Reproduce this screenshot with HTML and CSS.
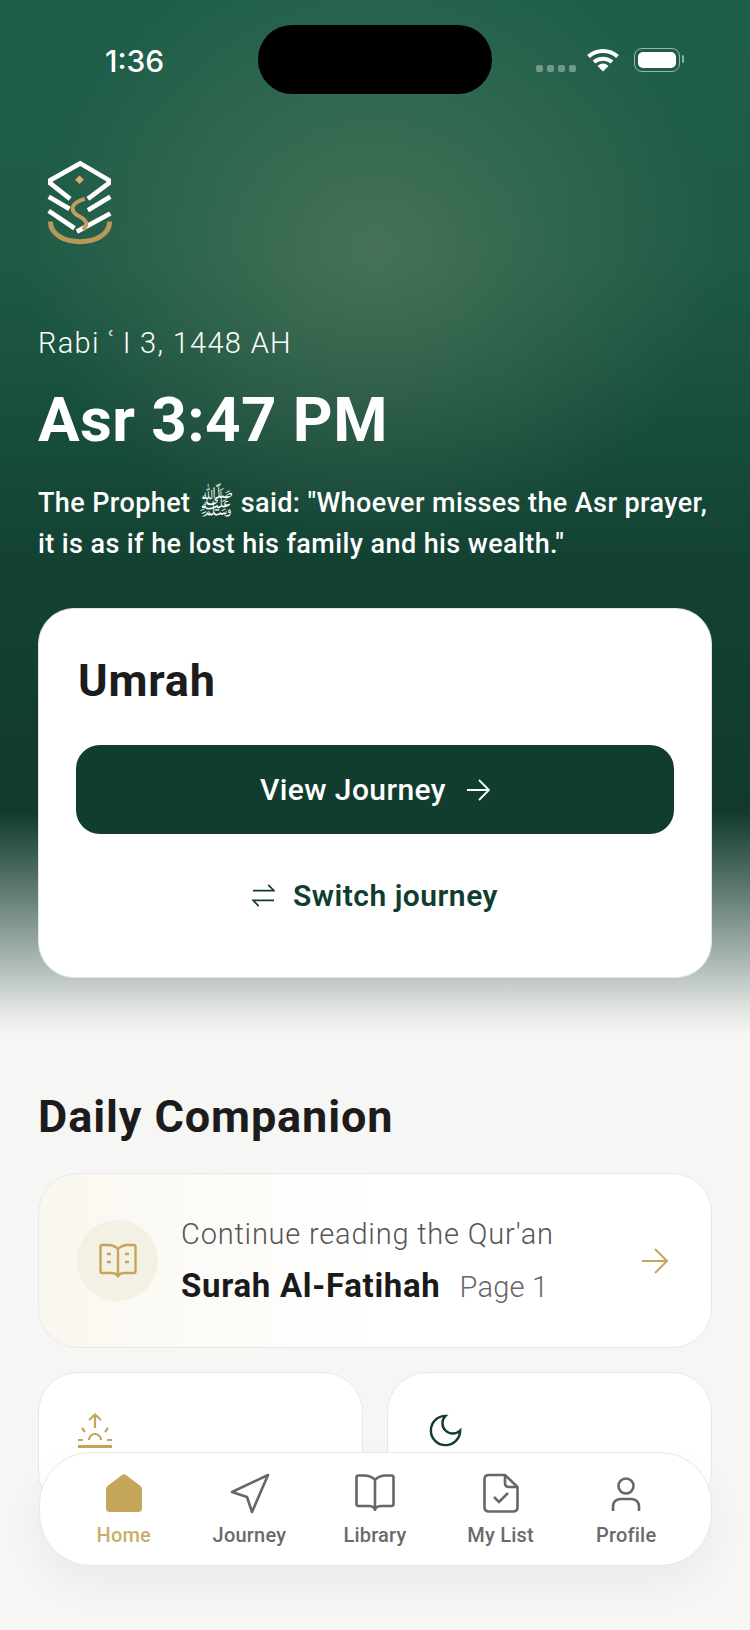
FILE: index.html
```html
<!DOCTYPE html>
<html lang="en">
<head>
    <meta charset="UTF-8">
    <meta name="viewport" content="width=device-width, initial-scale=1.0">
    <title>Home</title>
    <link rel="stylesheet" href="styles.css">
</head>
<body>
    <div class="page">
        <header class="hero">
            <div class="status">
                <span class="time">1:36</span>
                <div class="island"></div>
                <div class="signal"><i></i><i></i><i></i><i></i></div>
                <svg class="wifi" viewBox="0 0 32 24" width="32" height="24">
                    <path d="M1.5 8.5C9.5 1 22.5 1 30.5 8.5" fill="none" stroke="#fff" stroke-width="4"/>
                    <path d="M7 14C12 9.5 20 9.5 25 14" fill="none" stroke="#fff" stroke-width="4"/>
                    <path d="M10.5 18C13.5 14.5 18.500 14.500 21.500 18L16 23.500Z" fill="#fff"/>
                </svg>
                <div class="battery"><div class="battery-fill"></div></div>
            </div>

            <svg class="logo" viewBox="80 60 200 260" width="67" height="87">
                <g fill="none" stroke="#fff" stroke-width="14">
                    <path d="M152 182L93 136V126L182 76L267 126V136L205 182"/>
                    <path d="M88 176L150 212"/>
                    <path d="M88 218L165 270"/>
                    <path d="M272 176L205 216"/>
                    <path d="M272 226L172 280"/>
                </g>
                <path d="M196 182C150 195 150 220 180 235C205 248 205 262 190 274" fill="none" stroke="#c29d5f" stroke-width="12"/>
                <path d="M93 250C93 330 270 330 270 250" fill="none" stroke="#b8975a" stroke-width="15"/>
                <path d="M180 112L193 125L180 138L167 125Z" fill="#d9ac6d"/>
            </svg>

            <p class="hijri">Rabi ʿ I 3, 1448 AH</p>
            <h1 class="prayer">Asr 3:47 PM</h1>
            <p class="quote">
                <span class="quote-line">The Prophet <span class="salawat">ﷺ</span> said: "Whoever misses the Asr prayer,</span>
                <span class="quote-line">it is as if he lost his family and his wealth."</span>
            </p>

            <section class="journey-card">
                <h2 class="journey-title">Umrah</h2>
                <a class="journey-btn">View Journey
                    <svg viewBox="0 0 24 24" width="24" height="24"><path d="M1 12H23M13 2L23 12L13 22" fill="none" stroke="#fff" stroke-width="1.800"/></svg>
                </a>
                <a class="journey-switch">
                    <svg viewBox="0 0 24 24" width="23" height="23"><path d="M1 7H23L17 1M23 17H1L7 23" fill="none" stroke="#113d2e" stroke-width="1.800"/></svg>
                    Switch journey
                </a>
            </section>
        </header>

        <main class="daily">
            <h2 class="daily-title">Daily Companion</h2>

            <div class="reading">
                <div class="reading-icon">
                    <svg viewBox="0 0 38 36" width="38" height="36">
                        <g fill="none" stroke="#c5a55a" stroke-width="2.400">
                            <path d="M19 6C16 3 13 2 9 2H3Q1.500 2 1.500 4V28Q1.500 30 3 30H13Q17 30 19 33Q21 30 25 30H35Q36.500 30 36.500 28V4Q36.500 2 35 2H29C25 2 22 3 19 6V33"/>
                            <path d="M8 11H12M8 19H12M26 11H30M26 19H30"/>
                        </g>
                    </svg>
                </div>
                <div class="reading-text">
                    <div class="reading-label">Continue reading the Qur'an</div>
                    <div class="reading-surah"><strong>Surah Al-Fatihah</strong><span>Page 1</span></div>
                </div>
                <svg class="reading-arrow" viewBox="0 0 26 26" width="26" height="26"><path d="M0 13H25M13 1L25 13L13 25" fill="none" stroke="#c5a55a" stroke-width="2"/></svg>
            </div>

            <div class="times">
                <div class="time-card">
                    <svg viewBox="0 0 36 36" width="36" height="36">
                        <g fill="none" stroke="#c5a55a" stroke-width="2.200">
                            <path d="M18 15V2M12 7L18 1.500L24 7"/>
                            <path d="M12 27A6 6 0 0 1 24 27"/>
                            <path d="M5 15L8 19M31 15L28 19M1 27H6M30 27H35"/>
                        </g>
                        <path d="M1 33.500H35" stroke="#c5a55a" stroke-width="2.800"/>
                    </svg>
                </div>
                <div class="time-card">
                    <svg class="moon" viewBox="0 0 24 24" width="39" height="39"><path d="M12 3a6 6 0 0 0 9 9 9 9 0 1 1-9-9Z" fill="none" stroke="#113d2e" stroke-width="1.500"/></svg>
                </div>
            </div>
        </main>

        <nav class="tabbar">
            <a class="tab active">
                <svg viewBox="0 0 40 40" width="40" height="40"><path d="M18 2Q20 .5 22 2L36.500 13Q38 14.500 38 16V35Q38 39 34 39H6Q2 39 2 35V16Q2 14.500 3.500 13Z" fill="#c5a55a"/></svg>
                Home
            </a>
            <a class="tab">
                <svg viewBox="0 0 40 40" width="40" height="40"><path d="M39 2L3 19L18 24L23 39Z" fill="none" stroke="#666" stroke-width="2.600" stroke-linejoin="round"/></svg>
                Journey
            </a>
            <a class="tab">
                <svg viewBox="0 0 40 40" width="40" height="40"><path d="M20 7C17 3.500 14 2.500 9 2.500H3.500Q1.500 2.500 1.500 4.500V31Q1.500 33 3.500 33H14Q18 33 20 36Q22 33 26 33H36.500Q38.500 33 38.500 31V4.500Q38.500 2.500 36.500 2.500H31C26 2.500 23 3.500 20 7V38" fill="none" stroke="#666" stroke-width="2.600"/></svg>
                Library
            </a>
            <a class="tab">
                <svg viewBox="0 0 40 40" width="40" height="40">
                    <g fill="none" stroke="#666" stroke-width="2.600">
                        <path d="M24 2H8Q3.500 2 3.500 6V34Q3.500 38.500 8 38.500H32Q36.500 38.500 36.500 34V14Z"/>
                        <path d="M24 2V10Q24 14 28 14H36.500"/>
                        <path d="M13 24L18 29L27 20"/>
                    </g>
                </svg>
                My List
            </a>
            <a class="tab">
                <svg viewBox="0 0 40 40" width="40" height="40">
                    <g fill="none" stroke="#666" stroke-width="2.600">
                        <circle cx="20" cy="13" r="7.500"/>
                        <path d="M7 38V34C7 28 11 26 15 26H25C29 26 33 28 33 34V38"/>
                    </g>
                </svg>
                Profile
            </a>
        </nav>
    </div>
</body>
</html>
```

FILE: styles.css
```css
* {
    box-sizing: border-box;
}

body {
    margin: 0;
    font-family: Roboto, "Noto Sans", sans-serif;
    background-color: #f6f6f4;
}

.page {
    position: relative;
    width: 750px;
    height: 1630px;
    overflow: hidden;
    background-color: #f6f6f4;
}

.hero {
    height: 1035px;
    padding: 0 38px;
    color: #fff;
    background:
        radial-gradient(ellipse 350px 300px at 375px 250px, rgba(96, 130, 100, 0.6), rgba(96, 130, 100, 0) 100%),
        linear-gradient(to bottom, #1e5f49 0, #1d5a45 260px, #134233 560px, #113a2c 812px, #5f7a70 890px, #a9b6b1 960px, #e2e5e2 1010px, #f6f6f4 1035px);
}

.status {
    display: flex;
    align-items: center;
    height: 94px;
    padding: 25px 0 0 67px;
}

.time {
    width: 62px;
    margin-top: 3px;
    font-family: Inter, sans-serif;
    font-size: 30px;
    font-weight: 500;
}

.island {
    width: 234px;
    height: 69px;
    margin-left: 91px;
    border-radius: 34px;
    background-color: #000;
}

.signal {
    display: flex;
    gap: 4px;
    margin: 18px 0 0 44px;
}

.signal i {
    width: 7px;
    height: 7px;
    border-radius: 2px;
    background-color: rgba(255, 255, 255, 0.35);
}

.wifi {
    margin: 0 0 0 11px;
}

.battery {
    position: relative;
    width: 46px;
    height: 24px;
    margin: 0 0 0 15px;
    padding: 3px;
    border: 1.500px solid rgba(255, 255, 255, 0.55);
    border-radius: 8px;
}

.battery::after {
    content: "";
    position: absolute;
    top: 6px;
    right: -5px;
    width: 2px;
    height: 8px;
    border-radius: 1px;
    background-color: rgba(255, 255, 255, 0.5);
}

.battery-fill {
    height: 100%;
    border-radius: 5px;
    background-color: #fff;
}

.logo {
    display: block;
    margin: 64px 0 0 8px;
}

.hijri {
    margin: 81px 0 0;
    font-size: 29px;
    font-weight: 300;
    letter-spacing: 1.300px;
    line-height: 34px;
}

.prayer {
    margin: 25px 0 0;
    font-size: 62px;
    font-weight: 700;
    letter-spacing: 0.400px;
    line-height: 70px;
}

.quote {
    margin: 28px 0 0;
    font-size: 27px;
    font-weight: 500;
    letter-spacing: 0.400px;
    line-height: 41px;
}

.quote-line {
    display: block;
    height: 41px;
    white-space: nowrap;
}

.salawat {
    display: inline-block;
    font-family: "DejaVu Sans", "Noto Sans", sans-serif;
    font-size: 30px;
    line-height: 1;
    vertical-align: -2px;
}

.journey-card {
    height: 370px;
    margin-top: 43px;
    padding: 44px 37px 0;
    border: 1px solid #dfe5e2;
    border-radius: 36px;
    background-color: #fff;
}

.journey-title {
    margin: 0 0 0 2px;
    color: #1c1c1c;
    font-size: 45px;
    font-weight: 700;
    letter-spacing: 0.800px;
    line-height: 56px;
}

.journey-btn {
    display: flex;
    align-items: center;
    justify-content: center;
    gap: 20px;
    height: 89px;
    margin-top: 36px;
    border-radius: 24px;
    background-color: #113d2e;
    color: #fff;
    font-size: 30px;
    font-weight: 500;
    letter-spacing: 0.400px;
}

.journey-switch {
    display: flex;
    align-items: center;
    justify-content: center;
    gap: 18px;
    height: 40px;
    margin-top: 41px;
    color: #113d2e;
    font-size: 30px;
    font-weight: 600;
    letter-spacing: 0.500px;
}

.daily {
    padding: 54px 38px 0;
}

.daily-title {
    margin: 0;
    color: #1c1c1c;
    font-size: 45px;
    font-weight: 700;
    letter-spacing: 0.900px;
    line-height: 56px;
}

.reading {
    display: flex;
    align-items: center;
    height: 175px;
    margin-top: 28px;
    padding: 0 43px 0 38px;
    border: 1px solid #e8e8e6;
    border-radius: 40px;
    background: linear-gradient(to right, #faf7ef, #fff 50%);
}

.reading-icon {
    display: flex;
    align-items: center;
    justify-content: center;
    flex-shrink: 0;
    width: 81px;
    height: 81px;
    border-radius: 50%;
    background-color: #f3f0e4;
}

.reading-text {
    margin-left: 23px;
}

.reading-label {
    color: #555;
    font-size: 29px;
    font-weight: 300;
    letter-spacing: 0.800px;
    line-height: 40px;
}

.reading-surah {
    display: flex;
    align-items: baseline;
    gap: 19px;
    margin-top: 12px;
    color: #666;
    font-size: 29px;
    font-weight: 300;
    letter-spacing: 0.200px;
    line-height: 40px;
}

.reading-surah strong {
    color: #1a1a1a;
    font-size: 33px;
    font-weight: 700;
    letter-spacing: 0.700px;
}

.reading-arrow {
    margin-left: auto;
}

.times {
    display: flex;
    gap: 24px;
    margin-top: 24px;
}

.time-card {
    flex: 1;
    height: 140px;
    padding: 40px 38px 0;
    border: 1px solid #e8e8e6;
    border-radius: 40px;
    background-color: #fff;
}

.moon {
    margin-top: -2px;
}

/* floats over the cards */
.tabbar {
    position: absolute;
    left: 39px;
    top: 1452px;
    display: flex;
    width: 673px;
    height: 114px;
    padding: 20px 22px 0 21px;
    border: 1px solid #e8e8e6;
    border-radius: 52px;
    background-color: #fff;
    box-shadow: 0 18px 40px rgba(0, 0, 0, 0.05);
}

.tab {
    display: flex;
    flex: 1;
    flex-direction: column;
    align-items: center;
    gap: 9px;
    color: #6a6a6a;
    font-size: 20px;
    font-weight: 500;
    letter-spacing: 0.200px;
    line-height: 26px;
}

.tab svg {
    overflow: visible;
}

.tab.active {
    color: #c9ae6a;
}
```
